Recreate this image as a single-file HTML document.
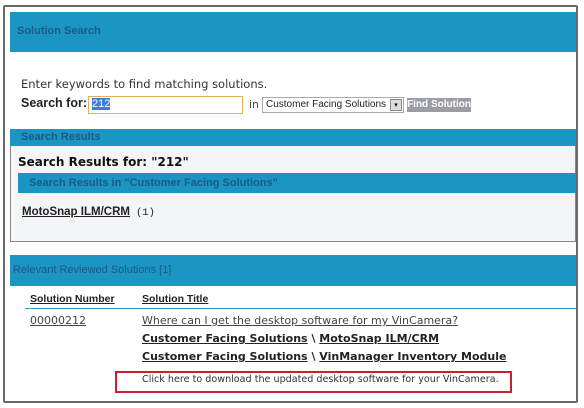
<!DOCTYPE html>
<html><head><style>
body{margin:0;width:584px;height:408px;background:#fff;font-family:"DejaVu Sans","Liberation Sans",sans-serif;position:relative;overflow:hidden}
div,span{position:absolute}
.bar{background:#1b95c2;left:10px;right:8px}
.bt{color:#1d5a86;font-weight:bold;font-size:11px;font-family:"Liberation Sans",sans-serif}
u{text-decoration:underline}
.t{white-space:nowrap;color:#222}
</style></head><body>
<div style="left:3px;top:5px;width:571px;height:394px;border:2px solid #6a6a6a;border-radius:2px"></div>
<div class="bar" style="top:12px;height:40px"><span class="bt" style="left:7px;top:13px">Solution Search</span></div>
<div class="t" style="left:21px;top:77px;font-size:11.5px;color:#333">Enter keywords to find matching solutions.</div>
<div class="t" style="left:21px;top:96px;font-size:12.5px;font-weight:bold;font-family:'Liberation Sans'">Search for:</div>
<div style="left:88px;top:96px;width:153px;height:16px;border:1px solid #e0b060;background:#fff"><span style="left:3px;top:1px;font-size:11px;background:#3a7fd5;color:#fff;font-family:'Liberation Sans'">212</span></div>
<div class="t" style="left:249px;top:98px;font-size:11px;color:#444">in</div>
<div style="left:262px;top:97px;width:140px;height:14px;border:1px solid #aaa;background:#fff"><span style="left:3px;top:1px;font-size:10px;font-family:'Liberation Sans';color:#222;white-space:nowrap">Customer Facing Solutions</span><span style="right:1px;top:1px;width:10px;height:10px;border:1px solid #888;background:#ddd;font-size:7px;text-align:center;line-height:10px">▾</span></div>
<div style="left:407px;top:98px;width:64px;height:14px;background:#9a9ea4;color:#fff;font-size:10px;font-weight:bold;font-family:'Liberation Sans';text-align:center;line-height:14px">Find Solution</div>
<div class="bar" style="top:129px;height:17px"><span class="bt" style="left:11px;top:2px">Search Results</span></div>
<div style="left:10px;top:146px;width:564px;height:95px;background:#f4f5f6;border:1px solid #888;border-top:none"></div>
<div class="t" style="left:18px;top:155px;font-size:12px;font-weight:bold;color:#111">Search Results for: "212"</div>
<div style="left:18px;top:173px;right:8px;height:20px;background:#1b95c2"><span class="bt" style="left:11px;top:4px">Search Results in "Customer Facing Solutions"</span></div>
<div class="t" style="left:22px;top:206px;font-size:11.5px;font-weight:bold;font-family:'Liberation Sans'"><u>MotoSnap ILM/CRM</u></div>
<div class="t" style="left:136px;top:207px;font-size:10.5px;font-family:'Liberation Mono'">(1)</div>
<div class="bar" style="top:255px;height:31px"><span class="bt" style="left:3px;top:9px;font-weight:normal;color:#1d5a86">Relevant Reviewed Solutions [1]</span></div>
<div class="t" style="left:30px;top:293px;font-size:10.5px;font-weight:bold;font-family:'Liberation Sans'"><u>Solution Number</u></div>
<div class="t" style="left:142px;top:293px;font-size:10.5px;font-weight:bold;font-family:'Liberation Sans'"><u>Solution Title</u></div>
<div style="left:25px;top:308px;right:8px;height:1px;background:#2a9bc6"></div>
<div class="t" style="left:30px;top:314px;font-size:11px;color:#444"><u>00000212</u></div>
<div class="t" style="left:142px;top:314px;font-size:11px;color:#444"><u>Where can I get the desktop software for my VinCamera?</u></div>
<div class="t" style="left:142px;top:332px;font-size:11px;font-weight:bold"><u>Customer Facing Solutions</u> \ <u>MotoSnap ILM/CRM</u></div>
<div class="t" style="left:142px;top:350px;font-size:11px;font-weight:bold"><u>Customer Facing Solutions</u> \ <u>VinManager Inventory Module</u></div>
<div style="left:115px;top:371px;width:393px;height:18px;border:2px solid #c8202e"></div>
<div class="t" style="left:142px;top:374px;font-size:9.6px;color:#333">Click here to download the updated desktop software for your VinCamera.</div>
</body></html>
